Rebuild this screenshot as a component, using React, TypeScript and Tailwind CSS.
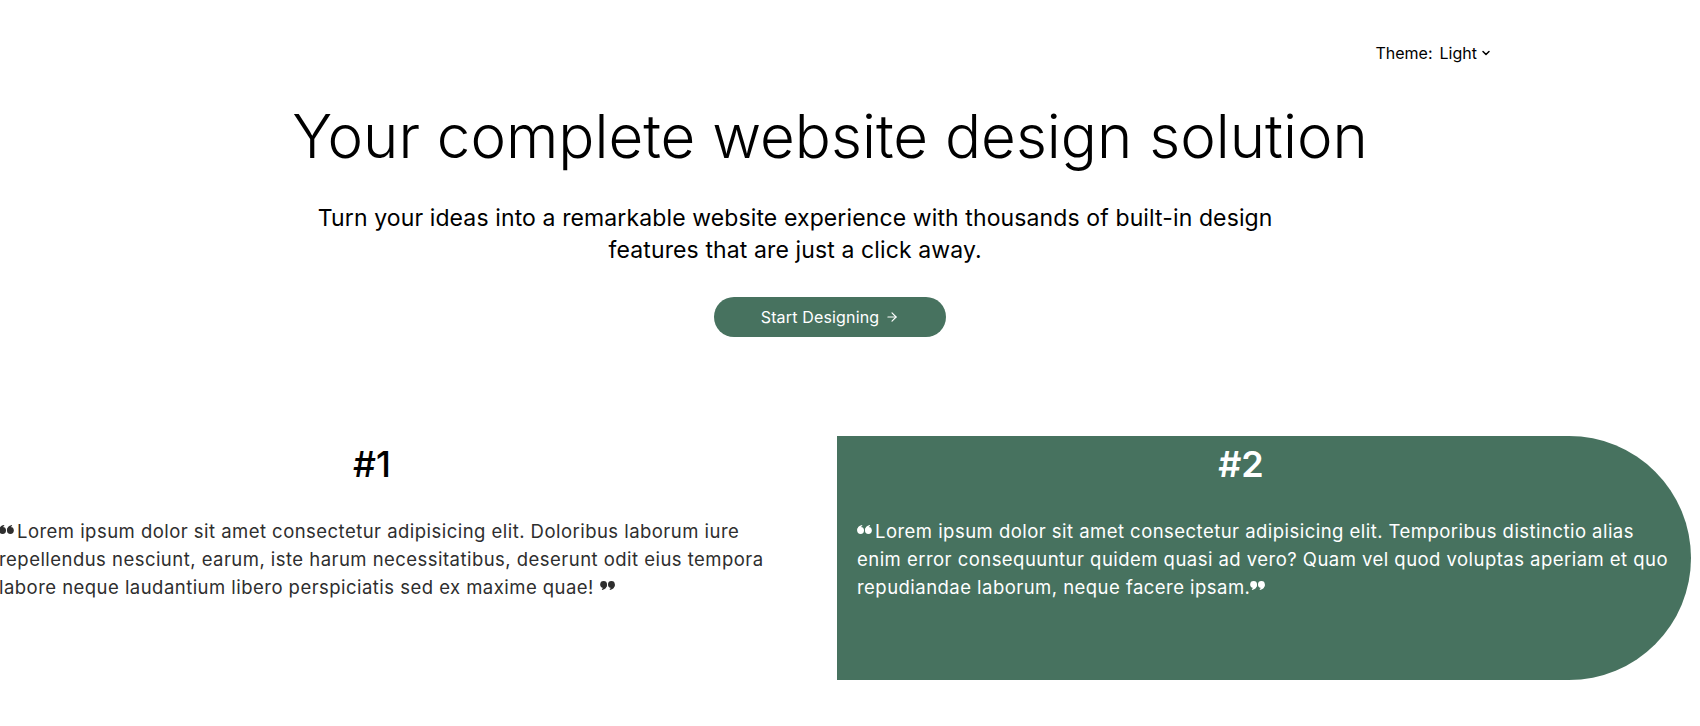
import React from "react";
import { ArrowRight, ChevronDown } from "lucide-react";

interface Testimonial {
  label: string;
  text: string;
  highlighted?: boolean;
  headingWidth: string;
  closeGap?: boolean;
}

const testimonials: Testimonial[] = [
  {
    label: "#1",
    text: "Lorem ipsum dolor sit amet consectetur adipisicing elit. Doloribus laborum iure repellendus nesciunt, earum, iste harum necessitatibus, deserunt odit eius tempora labore neque laudantium libero perspiciatis sed ex maxime quae!",
    headingWidth: "w-[746px]",
    closeGap: true,
  },
  {
    label: "#2",
    text: "Lorem ipsum dolor sit amet consectetur adipisicing elit. Temporibus distinctio alias enim error consequuntur quidem quasi ad vero? Quam vel quod voluptas aperiam et quo repudiandae laborum, neque facere ipsam.",
    highlighted: true,
    headingWidth: "w-[768px]",
  },
];

function QuoteMark({ close = false }: { close?: boolean }) {
  return (
    <svg
      width="15"
      height="9"
      viewBox="0 0 15 9"
      fill="currentColor"
      className={`inline-block align-[4px] ${close ? "rotate-180" : ""}`}
    >
      <circle cx="3.6" cy="5.5" r="3.4" />
      <path d="M0.2 5.5 C0.2 2.6 2 0.5 5 0 L5.4 1.1 C3.8 1.7 3 3 3 5.2 Z" />
      <circle cx="11.4" cy="5.5" r="3.4" />
      <path d="M8 5.5 C8 2.6 9.8 0.5 12.8 0 L13.2 1.1 C11.6 1.7 10.8 3 10.8 5.2 Z" />
    </svg>
  );
}

function Slide({ item }: { item: Testimonial }) {
  return (
    <div
      className={`w-[854px] h-[244px] shrink-0 pt-2 pl-5 pr-[20px] ${
        item.highlighted
          ? "bg-[#47725f] rounded-r-full text-white"
          : "bg-white text-[#2e2e2e]"
      }`}
    >
      <h2
        className={`${item.headingWidth} text-center text-[36px] leading-10 ${
          item.highlighted ? "font-semibold text-white" : "font-medium text-black"
        }`}
      >
        {item.label}
      </h2>
      <p className="mt-[33px] text-[18.5px] leading-[28px] tracking-[0.025em]">
        <QuoteMark />
        <span className="ml-[3px]">{item.text}</span>
        {item.closeGap ? " " : ""}
        <QuoteMark close />
      </p>
    </div>
  );
}

export default function App() {
  return (
    <div className="min-h-screen bg-white font-['Inter','Liberation_Sans',sans-serif] overflow-hidden">
      <div className="w-[1660px] flex flex-col">
        <div className="flex justify-end pr-[168px] pt-[41px]">
          <button className="flex items-center gap-[7px] text-[16px] leading-[24px] text-black">
            <span>Theme:</span>
            <span className="flex items-center gap-[3px]">
              Light
              <ChevronDown size={12} strokeWidth={3} />
            </span>
          </button>
        </div>

        <div className="w-fit mx-auto mt-[41px]">
          <h1 className="font-light text-[60px] leading-[60px] text-black whitespace-nowrap">
            Your complete website design solution
          </h1>
          <p className="w-[1006px] mt-[36px] text-center text-[23px] leading-[32px] tracking-[0.005em] text-black">
            Turn your ideas into a remarkable website experience with thousands of built-in design
            features that are just a click away.
          </p>
        </div>

        <div className="flex justify-center mt-[31px]">
          <button className="w-[232px] h-10 rounded-full bg-[#47725f] text-white text-[16px] tracking-[0.01em] flex items-center justify-center gap-[6px]">
            Start Designing
            <ArrowRight size={14} strokeWidth={2} />
          </button>
        </div>
      </div>

      <div className="mt-[99px] w-[1700px] overflow-hidden">
        <div className="flex gap-1 -ml-[21px]">
          {testimonials.map((item) => (
            <Slide key={item.label} item={item} />
          ))}
        </div>
      </div>
    </div>
  );
}
